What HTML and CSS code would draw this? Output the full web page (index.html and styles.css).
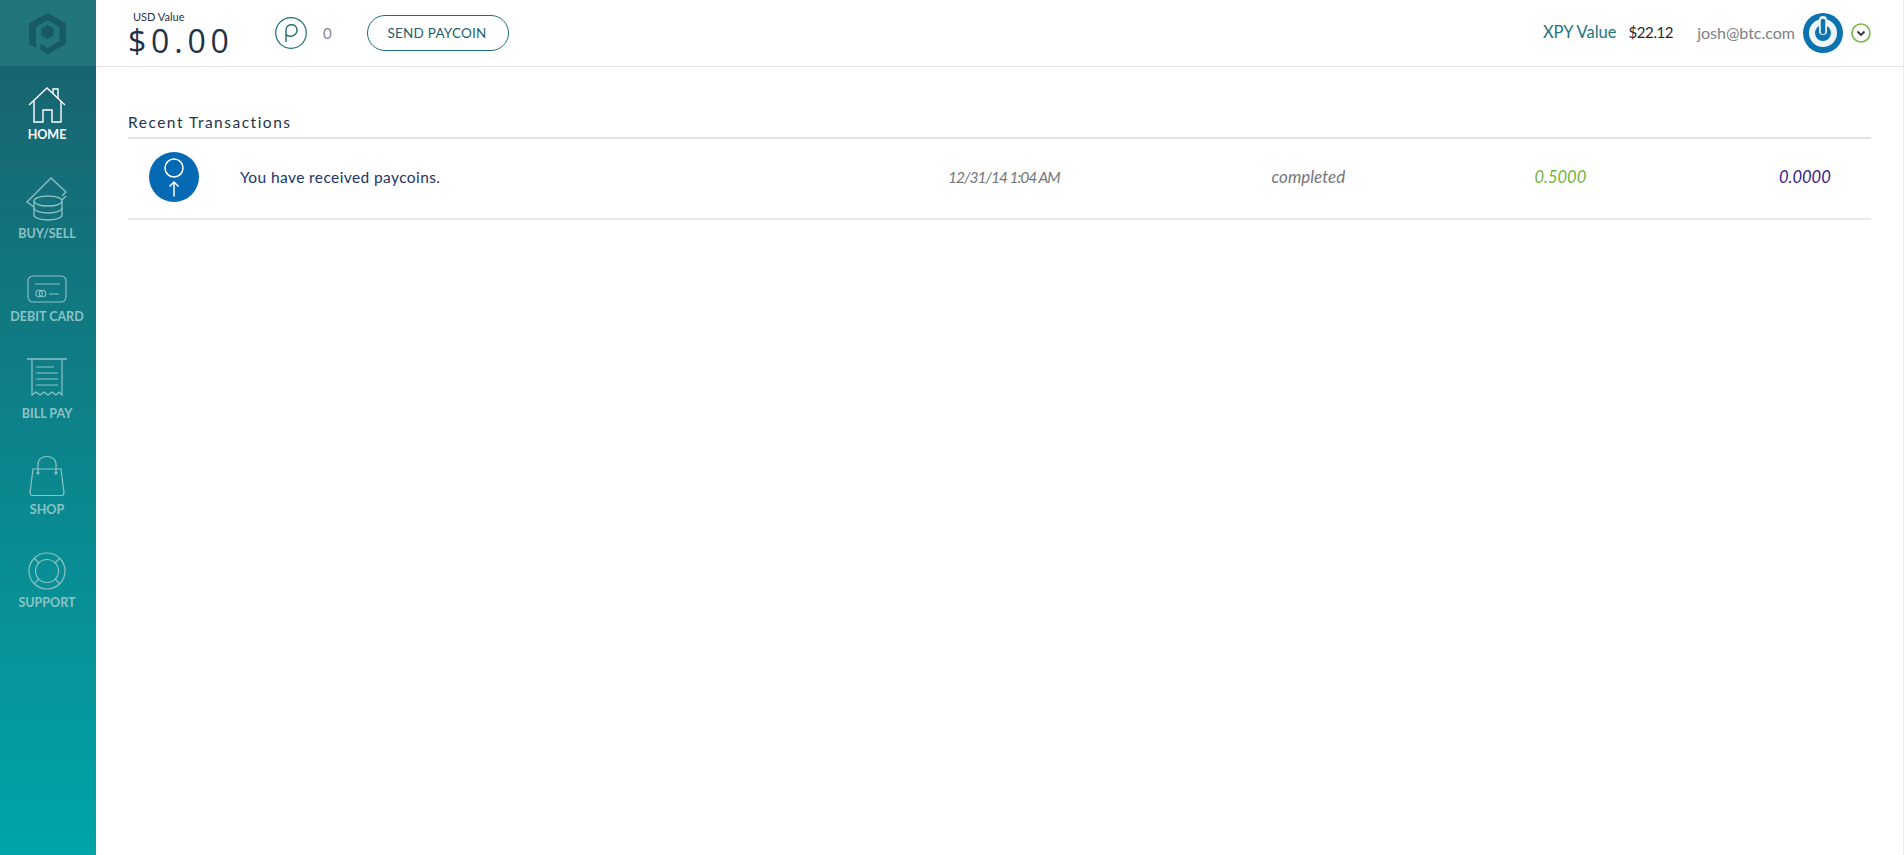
FILE: index.html
```html
<!DOCTYPE html>
<html lang="en">
<head>
<meta charset="utf-8">
<title>Paycoin Wallet</title>
<link rel="stylesheet" href="styles.css">
</head>
<body>
<div class="app">
  <aside class="sidebar">
    <div class="logo">
      <svg width="37" height="41" viewBox="0 0 37 41"><path d="M18.500 0 L37 10.500 V31 L18.500 41 L11.500 37 V31 L18.500 35 L30.500 28 V14 L18.500 7 L7 14 V35 L0 31 V10.500 Z" fill="#175a66"/><path d="M18.500 12 L24.500 15.500 V22.500 L18.500 26 L12.500 22.500 V15.500 Z" fill="#175a66"/></svg>
    </div>
    <nav class="nav">
      <a class="item active home">
        <svg width="38" height="36" viewBox="0 0 38 36" fill="none" stroke="currentColor" stroke-width="1.4"><path d="M1 18 L19 1 L37 18"/><path d="M25 7 V2 H30 V12"/><path d="M6 14 V35 H15 V23 H24 V35 H33 V14"/></svg>
        <span>HOME</span>
      </a>
      <a class="item buy">
        <svg width="42" height="44" viewBox="0 0 42 44" fill="none" stroke="currentColor" stroke-width="1.3"><path d="M8 30 L1 25 L25 1 L40 15 L36 19"/><path d="M40 19 L36 23"/><ellipse cx="22" cy="24" rx="14" ry="5"/><path d="M8 24 V38 C8 41 15 43 22 43 C29 43 36 41 36 38 V24"/><path d="M8 31 C8 34 15 36 22 36 C29 36 36 34 36 31"/></svg>
        <span>BUY/SELL</span>
      </a>
      <a class="item card">
        <svg width="40" height="28" viewBox="0 0 40 28" fill="none" stroke="currentColor" stroke-width="1.1"><rect x="1" y="1" width="38" height="26" rx="5"/><path d="M8 9 H33 M22 19 H32"/><circle cx="12" cy="18.500" r="3.200"/><circle cx="15.500" cy="18.500" r="3.200"/></svg>
        <span>DEBIT CARD</span>
      </a>
      <a class="item bill">
        <svg width="42" height="40" viewBox="0 0 42 40" fill="none" stroke="currentColor" stroke-width="1.2"><path d="M1 1 H41" stroke-width="1.600"/><path d="M6 1 V37 L10 34 L14 37 L18 34 L22 37 L26 34 L30 37 L33 34 L36 37 V1"/><path d="M10 9 H28 M10 15 H32 M10 21 H32 M10 27 H32"/></svg>
        <span>BILL PAY</span>
      </a>
      <a class="item shop">
        <svg width="38" height="42" viewBox="0 0 38 42" fill="none" stroke="currentColor" stroke-width="1.2"><path d="M5 14 H33 L36 38 Q36 40.500 33 40.500 H5 Q2 40.500 2 38 Z"/><path d="M10 18 V9 C10 -1 28 -1 28 9 V18"/><circle cx="10" cy="18" r="1" fill="currentColor"/><circle cx="28" cy="18" r="1" fill="currentColor"/></svg>
        <span>SHOP</span>
      </a>
      <a class="item help">
        <svg width="38" height="38" viewBox="0 0 38 38" fill="none" stroke="currentColor" stroke-width="1.2"><circle cx="19" cy="19" r="18"/><circle cx="19" cy="19" r="11.500"/><path d="M11 11 L6 6 M27 11 L32 6 M11 27 L6 32 M27 27 L32 32"/></svg>
        <span>SUPPORT</span>
      </a>
    </nav>
  </aside>
  <div class="main">
    <header class="topbar">
      <div class="usd">
        <div class="usd-label">USD Value</div>
        <div class="usd-amount">$0.00</div>
      </div>
      <svg class="p-icon" width="32" height="32" viewBox="0 0 32 32" fill="none" stroke="#1c6e78" stroke-width="1.2"><circle cx="16" cy="16" r="15.300"/><path d="M11 25 V13 C11 6 22 6 22 13 C22 19 14 21 11 17.500" stroke-width="1.400"/></svg>
      <span class="p-count">0</span>
      <button class="send">SEND PAYCOIN</button>
      <div class="spacer"></div>
      <span class="xpy-label">XPY Value</span>
      <span class="xpy-value">$22.12</span>
      <span class="email">josh@btc.com</span>
      <svg class="power" width="40" height="40" viewBox="0 0 40 40"><circle cx="20" cy="20" r="20" fill="#0b74b0"/><circle cx="20" cy="20" r="11" fill="none" stroke="#eef5f9" stroke-width="6"/><path d="M20 7 V18" stroke="#eef5f9" stroke-width="8" stroke-linecap="round"/><path d="M20 8 V19" stroke="#0b74b0" stroke-width="4.500" stroke-linecap="round"/></svg>
      <svg class="chev" width="20" height="20" viewBox="0 0 20 20" fill="none"><circle cx="10" cy="10" r="9" stroke="#7ab648" stroke-width="1.600"/><path d="M6.500 8.500 L10 12 L13.500 8.500" stroke="#33383c" stroke-width="1.900"/></svg>
    </header>
    <main class="content">
      <h2 class="title">Recent Transactions</h2>
      <div class="row">
        <div class="tx-icon">
          <svg width="50" height="50" viewBox="0 0 50 50" fill="none" stroke="#fff"><circle cx="25" cy="16" r="9" stroke-width="1.500"/><path d="M25 44.500 V30 M20.500 34.500 L25 30 L29.500 34.500" stroke-width="1.500"/></svg>
        </div>
        <div class="tx-text">You have received paycoins.</div>
        <div class="tx-date">12/31/14 1:04 AM</div>
        <div class="tx-status">completed</div>
        <div class="tx-in">0.5000</div>
        <div class="tx-out">0.0000</div>
      </div>
    </main>
  </div>
</div>
</body>
</html>
```
FILE: styles.css
```css
* { box-sizing: border-box; }
html, body { margin: 0; height: 100%; background: #fff; }
body { font-family: "Lato", "Liberation Sans", sans-serif; overflow: hidden; }
.app { display: flex; height: 855px; }
.sidebar {
  width: 96px;
  flex: none;
  background: linear-gradient(180deg, #1a5f6c 0%, #00a5a8 100%);
  color: #8cc3c6;
}
.logo {
  height: 66px;
  background: #22747d;
  display: flex;
  align-items: center;
  justify-content: center;
  padding-right: 2px;
}
.nav { display: flex; flex-direction: column; padding-right: 2px; }
.item {
  display: flex;
  flex-direction: column;
  align-items: center;
  font-size: 12.5px;
  font-weight: 700;
  line-height: 16px;
  color: #8cc3c6;
}
.item svg { display: block; }
.item.active { color: #fff; }
.home { margin-top: 21px; }
.home span { margin-top: 4px; }
.buy { margin-top: 34px; }
.buy span { margin-top: 5px; }
.card { margin-top: 33px; }
.card span { margin-top: 6px; }
.bill { margin-top: 33px; }
.bill span { margin-top: 8px; }
.shop { margin-top: 33px; }
.shop span { margin-top: 5px; }
.help { margin-top: 34px; }
.help span { margin-top: 5px; }
.main { flex: 1; display: flex; flex-direction: column; min-width: 0; border-right: 1px solid #ececec; }
.topbar {
  height: 67px;
  border-bottom: 1px solid #e4e4e4;
  display: flex;
  align-items: center;
  padding-left: 32px;
  padding-right: 32px;
}
.usd { width: 147px; color: #1f3347; }
.usd-label { font-size: 11px; line-height: 13px; margin-left: 5px; margin-bottom: 2px; }
.usd-amount { font-size: 32px; line-height: 32px; letter-spacing: 4.8px; font-family: "Open Sans", sans-serif; }
.p-icon { flex: none; }
.p-count { margin-left: 16px; font-size: 15px; color: #85878a; width: 44px; }
.send {
  width: 142px;
  height: 36px;
  border: 1px solid #1c6e78;
  border-radius: 18px;
  background: #fff;
  color: #1c5f6b;
  font-family: "Lato", sans-serif;
  font-size: 13.5px;
  letter-spacing: 0.2px;
  padding: 0 2px 0 0;
}
.spacer { flex: 1; }
.xpy-label { font-size: 16.5px; color: #1c7580; margin-bottom: 3px; }
.xpy-value { font-size: 15px; letter-spacing: -0.4px; color: #1d2733; margin-left: 12px; margin-bottom: 3px; }
.email { font-size: 16px; color: #7d7f85; margin-left: 24px; margin-bottom: 2px; }
.power { margin-left: 8px; flex: none; }
.chev { margin-left: 8px; flex: none; }
.content { padding: 45px 32px 0; }
.title {
  margin: 0;
  font-size: 15.5px;
  font-weight: 400;
  line-height: 20px;
  letter-spacing: 1.5px;
  color: #1f3347;
  padding-bottom: 5px;
  border-bottom: 2px solid #e2e2e2;
}
.row {
  height: 81px;
  display: flex;
  align-items: center;
  padding-bottom: 4px;
  border-bottom: 2px solid #e8e8e8;
  font-size: 16.5px;
}
.tx-icon {
  width: 50px;
  height: 50px;
  border-radius: 50%;
  background: #0569b4;
  margin-left: 21px;
  flex: none;
}
.tx-icon svg { display: block; }
.tx-text { margin-left: 41px; width: 708px; color: #20336b; font-size: 15.5px; letter-spacing: 0.4px; flex: none; }
.tx-date { width: 323.5px; flex: none; font-style: italic; color: #74767a; font-size: 15.5px; letter-spacing: -1px; }
.tx-status { width: 263px; flex: none; font-style: italic; color: #74767a; font-size: 17px; }
.tx-in { width: 244.5px; flex: none; font-style: italic; color: #71b33f; }
.tx-out { flex: none; font-style: italic; color: #3a1a8c; }
```
